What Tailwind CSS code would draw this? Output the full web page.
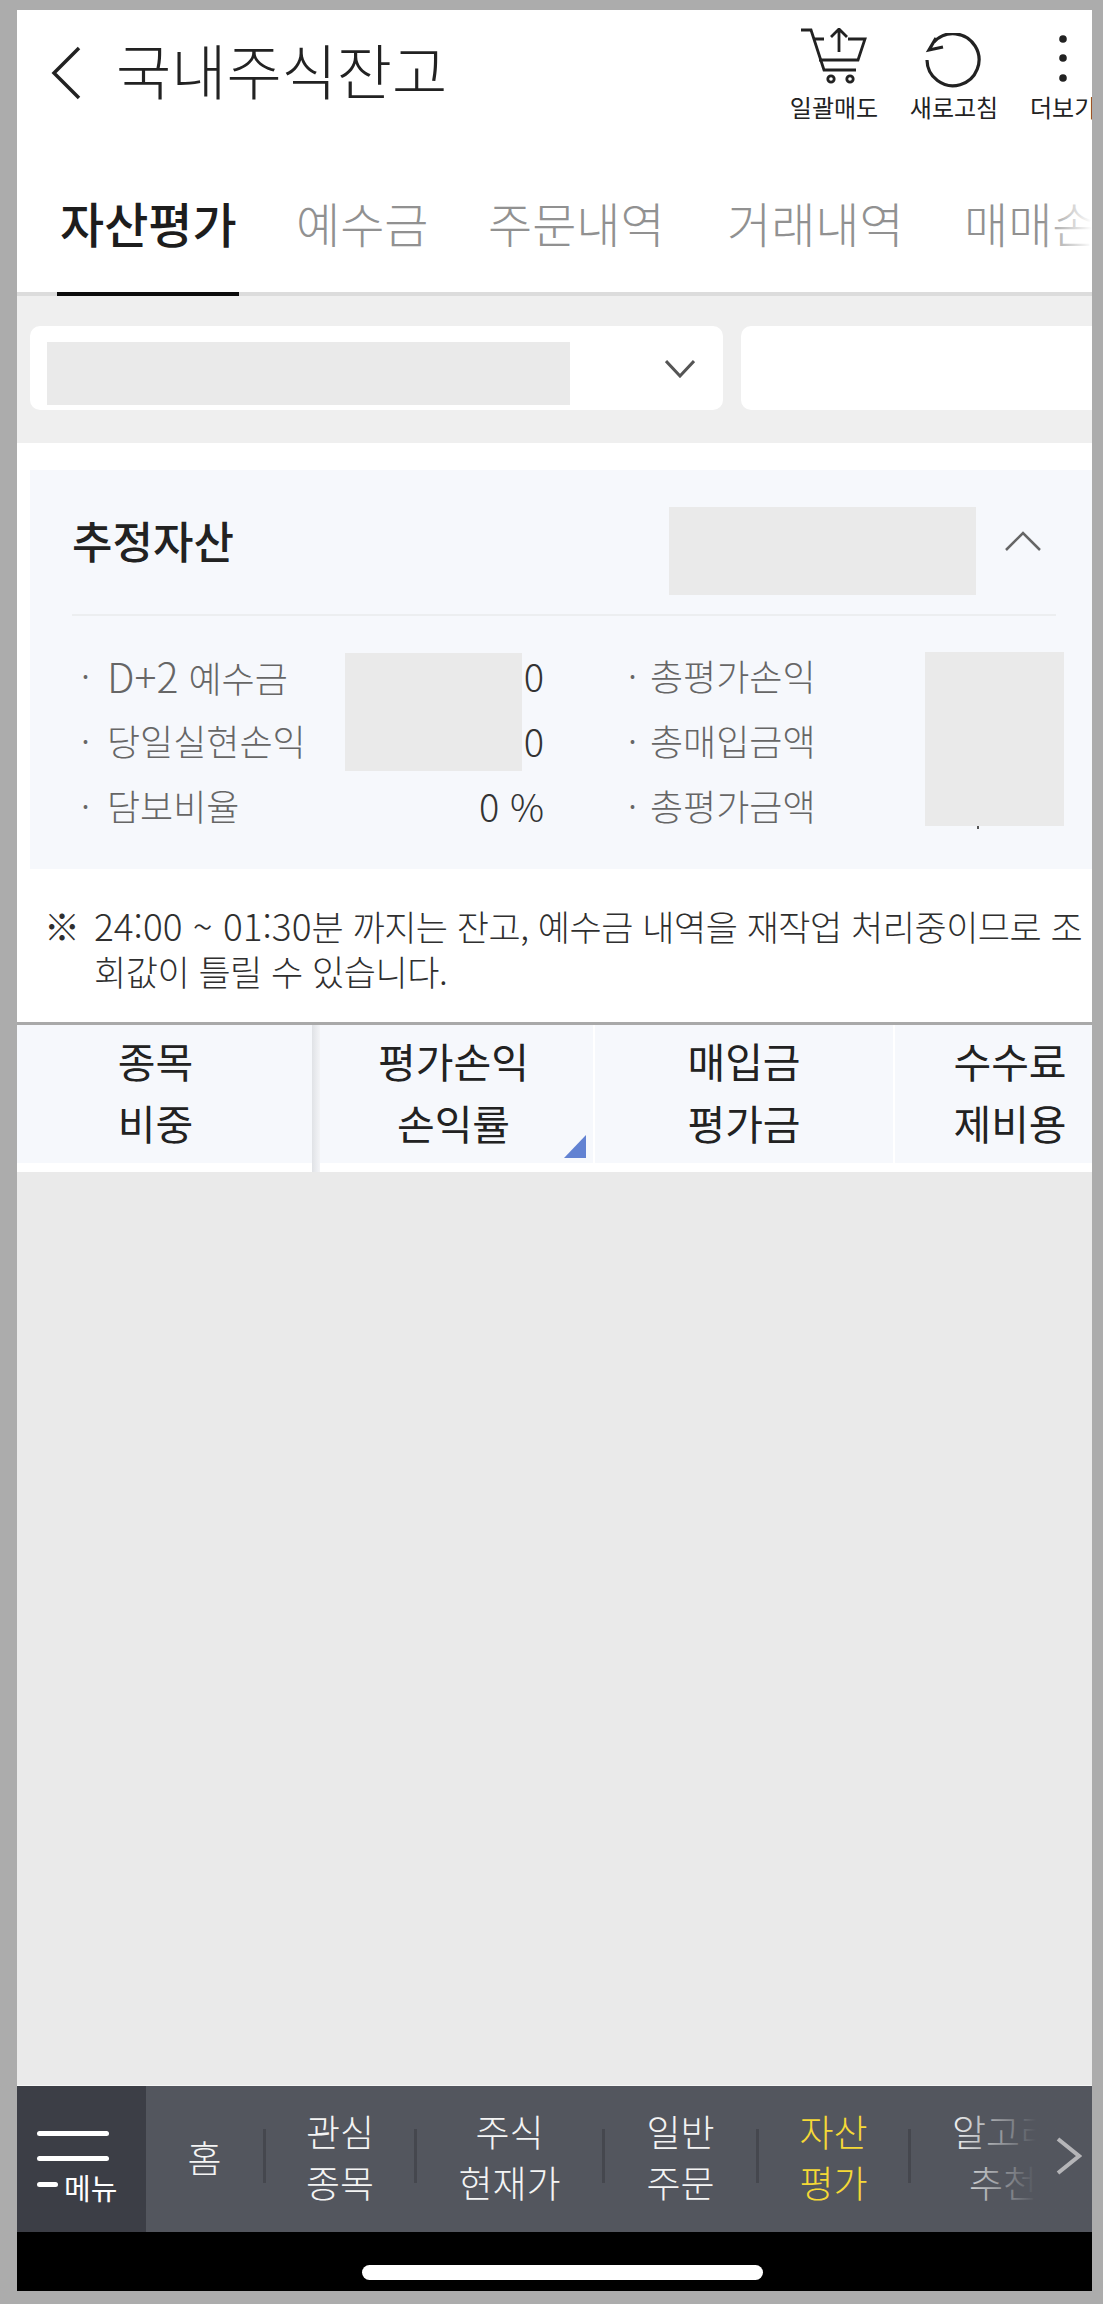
<!DOCTYPE html>
<html lang="ko">
<head>
<meta charset="utf-8">
<title>국내주식잔고</title>
<script src="https://cdn.jsdelivr.net/npm/@tailwindcss/browser@4"></script>
</head>
<body class="bg-[#acacac] font-['Noto_Sans_CJK_KR','Noto_Sans',sans-serif]">
<div class="w-[1103px] h-[2304px] pt-[10px] pl-[17px] overflow-hidden">
  <main class="relative w-[1075px] h-[2281px] overflow-hidden bg-white flex flex-col">

    <!-- App bar -->
    <header class="h-[124px] shrink-0 flex">
      <svg class="ml-[33px] mt-[36px] w-[32px] h-[54px]" viewBox="0 0 32 54" fill="none" stroke="#222" stroke-width="3.5"><path d="M29 2 4 27l25 25"/></svg>
      <h1 class="ml-[34px] mt-[23px] text-[60px] leading-[72px] font-light text-[#222]">국내주식잔고</h1>
      <div class="ml-auto flex text-[#222] text-[24px] leading-[30px] text-center">
        <div class="w-[120px] flex flex-col items-center pt-[18px]">
          <svg class="w-[66px] h-[58px]" viewBox="0 0 66 58" fill="none" stroke="#222" stroke-width="2.800"><path d="M0 2h10l13 40h32"/><path d="M13 11h10M47 11h17l-7 21H18"/><path d="M38 24V2M30 9l8-8 8 8"/><circle cx="30" cy="51" r="3.200"/><circle cx="49" cy="51" r="3.200"/></svg>
          <span class="mt-[6px] whitespace-nowrap">일괄매도</span>
        </div>
        <div class="w-[120px] flex flex-col items-center pt-[23px]">
          <svg class="w-[58px] h-[58px]" viewBox="0 0 58 58" fill="none" stroke="#222" stroke-width="3.2"><path d="M9 9A26 26 0 1 1 2 27"/><path d="M11 5 4 17l14-3"/></svg>
          <span class="mt-[1px] whitespace-nowrap">새로고침</span>
        </div>
        <div class="w-[78px] flex flex-col items-start pt-[23px] overflow-hidden">
          <svg class="ml-[43px] w-[12px] h-[58px]" viewBox="0 0 12 58" fill="#222"><circle cx="6" cy="6" r="3.800"/><circle cx="6" cy="25" r="3.800"/><circle cx="6" cy="45" r="3.800"/></svg>
          <span class="ml-[16px] mt-[1px] whitespace-nowrap">더보기</span>
        </div>
      </div>
    </header>

    <!-- Section tabs -->
    <nav class="relative h-[162px] shrink-0 border-b-4 border-[#dcdcdc] overflow-visible">
      <div class="flex h-full pt-[57px] pl-[40px] text-[48px] leading-[62px] text-[#919191] font-light whitespace-nowrap overflow-hidden">
        <span class="w-[188px] shrink-0 pl-[3px] font-medium text-[#1d1d1d]">자산평가</span>
        <span class="w-[192px] shrink-0 ml-[51px]">예수금</span>
        <span class="w-[239px] shrink-0">주문내역</span>
        <span class="w-[237px] shrink-0">거래내역</span>
        <span class="shrink-0">매매손익</span>
      </div>
      <span class="absolute left-[40px] bottom-[-4px] w-[182px] h-[4px] bg-[#0c0c0c]"></span>
      <span class="absolute right-0 top-0 w-[50px] h-full bg-gradient-to-r from-white/0 to-white"></span>
    </nav>

    <!-- Account selectors -->
    <section class="h-[147px] shrink-0 bg-[#efefef] pt-[30px] pl-[13px] flex gap-[18px]">
      <div class="w-[693px] h-[84px] bg-white rounded-[10px] relative">
        <div class="absolute left-[17px] top-[16px] w-[523px] h-[63px] bg-[#eaeaea]"></div>
        <svg class="absolute left-[635px] top-[34px] w-[30px] h-[18px]" viewBox="0 0 30 18" fill="none" stroke="#555" stroke-width="3"><path d="M1 1l14 15L29 1"/></svg>
      </div>
      <div class="flex-1 h-[84px] bg-white rounded-l-[10px]"></div>
    </section>

    <!-- Estimated assets -->
    <section class="shrink-0 pt-[27px] pl-[13px]">
      <div class="relative h-[399px] bg-[#f6f8fc] pl-[42px] pr-[36px]">
        <div class="h-[146px] border-b-2 border-[#eceef0] flex items-start">
          <h2 class="mt-[42px] text-[44px] leading-[56px] font-medium text-[#222]">추정자산</h2>
          <svg class="ml-auto mr-[15px] mt-[61px] w-[36px] h-[20px]" viewBox="0 0 36 20" fill="none" stroke="#666" stroke-width="2.500"><path d="M1 19 18 2l17 17"/></svg>
        </div>
        <div class="pt-[27px] text-[36px] leading-[65px] text-[#666] font-light">
          <div class="flex h-[65px]">
            <div class="w-[472px] flex"><span class="w-[35px] pl-[9px]">·</span><span><span class="text-[41px]">D+2</span> 예수금</span><span class="ml-auto text-[38px] text-[#333]">0</span></div>
            <div class="ml-[84px] flex"><span class="w-[22px]">·</span><span>총평가손익</span></div>
          </div>
          <div class="flex h-[65px]">
            <div class="w-[472px] flex"><span class="w-[35px] pl-[9px]">·</span><span>당일실현손익</span><span class="ml-auto text-[38px] text-[#333]">0</span></div>
            <div class="ml-[84px] flex"><span class="w-[22px]">·</span><span>총매입금액</span></div>
          </div>
          <div class="flex h-[65px]">
            <div class="w-[472px] flex"><span class="w-[35px] pl-[9px]">·</span><span>담보비율</span><span class="ml-auto text-[38px] text-[#333]">0 %</span></div>
            <div class="ml-[84px] flex"><span class="w-[22px]">·</span><span>총평가금액</span></div>
          </div>
        </div>
        <!-- Masked amounts -->
        <div class="absolute left-[639px] top-[37px] w-[307px] h-[88px] bg-[#eaeaea]"></div>
        <div class="absolute left-[315px] top-[183px] w-[177px] h-[118px] bg-[#eaeaea]"></div>
        <div class="absolute left-[895px] top-[182px] w-[139px] h-[174px] bg-[#eaeaea]"></div>
        <div class="absolute left-[947px] top-[356px] w-[2px] h-[3px] bg-[#555]"></div>
      </div>
    </section>

    <!-- Reprocessing notice -->
    <section class="h-[153px] shrink-0 pt-[34px] text-[35px] leading-[45px] text-[#2f2f2f] font-light flex">
      <span class="w-[77px] pl-[27px] text-[36px]">※</span>
      <p class="whitespace-nowrap tracking-[-0.5px]"><span class="text-[37px] tracking-normal">24:00 ~ 01:30</span>분 까지는 잔고, 예수금 내역을 재작업 처리중이므로 조<br>회값이 틀릴 수 있습니다.</p>
    </section>

    <!-- Holdings table header -->
    <section class="h-[150px] shrink-0 border-t-[3px] border-[#a9a9a9] text-[41px] leading-[62px] text-[#222] text-center flex">
      <div class="w-[295px] h-[138px] bg-[#f6f8fc] pt-[4px] pr-[18px]">종목<br>비중</div>
      <div class="w-[8px] h-[147px] bg-gradient-to-r from-[#e0e2e6] to-[#f3f4f7]"></div>
      <div class="relative w-[273px] h-[138px] bg-[#f6f8fc] pt-[4px] pr-[6px]">평가손익<br>손익률
        <svg class="absolute left-[244px] top-[110px] w-[22px] h-[23px]" viewBox="0 0 22 23"><path d="M22 0v23H0z" fill="#6282d2"/></svg>
      </div>
      <div class="w-[2px]"></div>
      <div class="w-[298px] h-[138px] bg-[#f6f8fc] pt-[4px]">매입금<br>평가금</div>
      <div class="w-[2px]"></div>
      <div class="flex-1 h-[138px] bg-[#f6f8fc] pt-[4px] whitespace-nowrap flex flex-col items-center pl-[33px]"><span>수수료</span><span>제비용</span></div>
    </section>

    <!-- Empty list -->
    <section class="flex-1 bg-[#eaeaea]"></section>
    <div class="h-[1px] shrink-0 bg-[#f5f5f5]"></div>

    <!-- Bottom quick menu -->
    <nav class="relative h-[146px] shrink-0 bg-[#53565e] flex text-[37px] leading-[51px] text-[#f4f4f4] text-center font-light">
      <div class="w-[129px] shrink-0 bg-[#3c3e46] pl-[20px] pt-[45px]">
        <div class="w-[72px] h-[5px] rounded-full bg-white"></div>
        <div class="mt-[20px] w-[72px] h-[5px] rounded-full bg-white"></div>
        <div class="flex items-center mt-[5px] h-[36px]">
          <span class="w-[21px] h-[5px] rounded-full bg-white"></span>
          <span class="ml-[6px] mt-[5px] text-[29px] leading-[36px] text-white whitespace-nowrap font-normal">메뉴</span>
        </div>
      </div>
      <div class="flex-1 flex items-center pb-[4px]">
        <div class="w-[117px] shrink-0">홈</div>
        <i class="w-[3px] h-[54px] shrink-0 bg-[#45474e] mb-[2px]"></i>
        <div class="w-[148px] shrink-0">관심<br>종목</div>
        <i class="w-[3px] h-[54px] shrink-0 bg-[#45474e] mb-[2px]"></i>
        <div class="w-[185px] shrink-0">주식<br>현재가</div>
        <i class="w-[3px] h-[54px] shrink-0 bg-[#45474e] mb-[2px]"></i>
        <div class="w-[151px] shrink-0">일반<br>주문</div>
        <i class="w-[3px] h-[54px] shrink-0 bg-[#45474e] mb-[2px]"></i>
        <div class="w-[149px] shrink-0 text-[#f6d936]">자산<br>평가</div>
        <i class="w-[3px] h-[54px] shrink-0 bg-[#45474e] mb-[2px]"></i>
        <div class="w-[184px] shrink-0 whitespace-nowrap">알고리<br>추천</div>
      </div>
      <span class="absolute right-0 top-0 w-[140px] h-full bg-gradient-to-r from-[#53565e]/0 to-[#53565e] to-[60%]"></span>
      <svg class="absolute left-[1039px] top-[51px] w-[26px] h-[38px]" viewBox="0 0 26 38" fill="none" stroke="#b5b5b8" stroke-width="4"><path d="M2 2l21 17L2 36"/></svg>
    </nav>

    <!-- Home indicator strip -->
    <div class="h-[59px] shrink-0 bg-black pt-[33px]">
      <div class="ml-[345px] w-[401px] h-[15px] rounded-[8px] bg-white"></div>
    </div>
  </main>
</div>
</body>
</html>
